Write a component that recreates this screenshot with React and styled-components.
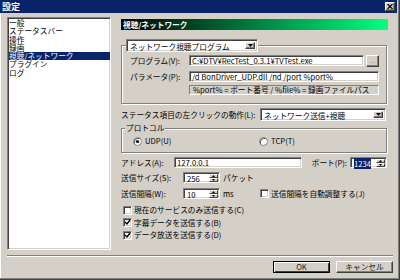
import React from 'react';
import styled, { createGlobalStyle } from 'styled-components';

const FONT = `"Noto Sans CJK JP", "Noto Sans", sans-serif`;

const Global = createGlobalStyle`
  html, body { margin: 0; padding: 0; background: #d4d0c8; }
  body { font-family: ${FONT}; font-size: 7.7px; line-height: 1; color: #000; }
  * { box-sizing: border-box; }
`;

const sunken = `
  background: #fff;
  border: 1px solid;
  border-color: #808080 #fff #fff #808080;
  box-shadow: inset 1px 1px 0 #404040, inset -1px -1px 0 #d4d0c8;
`;

const raised = `
  background: #d4d0c8;
  border: 1px solid;
  border-color: #fff #404040 #404040 #fff;
  box-shadow: inset -1px -1px 0 #808080, inset 1px 1px 0 #d4d0c8;
`;

const Window = styled.div`
  width: 400px;
  height: 280px;
  display: flex;
  flex-direction: column;
  background: #d4d0c8;
  border-right: 1px solid #404040;
  border-bottom: 1px solid #404040;
  box-shadow: inset -1px -1px 0 #808080, inset 1px 0 0 #fff;
  padding: 0 2px 2px 0;
`;

const TitleBar = styled.div`
  flex: none;
  height: 13px;
  background: #0a246a;
  display: flex;
  align-items: center;
  padding: 0 2px 0 2px;
`;

const TitleText = styled.span`
  color: #fff;
  font-weight: bold;
  font-size: 9px;
  line-height: 13px;
`;

const CloseButton = styled.div`
  ${raised}
  margin-left: auto;
  width: 10px;
  height: 9px;
  display: flex;
  align-items: center;
  justify-content: center;
`;

const Body = styled.div`
  flex: none;
  height: 237px;
  display: flex;
  padding: 4px 0 0 7px;
`;

const List = styled.div`
  ${sunken}
  width: 104px;
  height: 233px;
  padding: 1px 0 0 2px;
`;

const ListItem = styled.div`
  height: 8.25px;
  line-height: 8.25px;
  white-space: nowrap;
  margin-left: -1px;
  background: ${(p) => (p.$selected ? '#0a246a' : 'transparent')};
  color: ${(p) => (p.$selected ? '#fff' : '#000')};
`;

const Panel = styled.div`
  margin-left: 10px;
  width: 267px;
  display: flex;
  flex-direction: column;
`;

const Header = styled.div`
  margin-top: 2px;
  height: 11px;
  background: linear-gradient(to right, #000 0%, #00ff80 100%);
  color: #fff;
  font-weight: bold;
  line-height: 11px;
  padding-left: 2px;
`;

const Group = styled.fieldset`
  margin: ${(p) => p.$mt}px 0 0 0;
  width: 266px;
  min-width: 0;
  border: 1px solid #808080;
  box-shadow: inset 1px 1px 0 #fff, 1px 1px 0 #fff;
  padding: ${(p) => p.$pad};
`;

const ComboLegend = styled.legend`
  margin-left: -4px;
  padding: 0;
`;

const TextLegend = styled.legend`
  margin-left: -8px;
  padding: 0 1px;
  background: #d4d0c8;
  line-height: 8px;
  height: 8px;
`;

const ComboBox = styled.div`
  ${sunken}
  flex: none;
  width: ${(p) => p.$w}px;
  height: 13px;
  display: flex;
  align-items: stretch;
  padding: 2px;
`;

const ComboText = styled.span`
  flex: 1;
  padding-left: 1px;
  line-height: 9px;
  white-space: nowrap;
`;

const DropButton = styled.div`
  ${raised}
  flex: none;
  width: 10px;
  display: flex;
  align-items: center;
  justify-content: center;
`;

const FieldRow = styled.div`
  display: flex;
  align-items: ${(p) => p.$align || 'center'};
  height: ${(p) => p.$h}px;
  margin-top: ${(p) => p.$mt || 0}px;
`;

const Label = styled.span`
  flex: none;
  width: ${(p) => (p.$w ? `${p.$w}px` : 'auto')};
  white-space: nowrap;
`;

const TextBox = styled.div`
  ${sunken}
  flex: ${(p) => (p.$w ? 'none' : '1')};
  width: ${(p) => (p.$w ? `${p.$w}px` : 'auto')};
  height: 11px;
  padding: 0 2px;
  line-height: 9px;
  white-space: nowrap;
`;

const BrowseButton = styled.div`
  ${raised}
  width: 13px;
  height: 12px;
  margin-left: 2px;
  display: flex;
  align-items: center;
  justify-content: center;
  color: #808080;
  font-size: 6px;
  letter-spacing: -0.5px;
`;

const HintBox = styled.div`
  flex: 1;
  margin-left: 59px;
  height: 10px;
  border: 1px solid;
  border-color: #808080 #fff #fff #808080;
  padding-left: 3px;
  line-height: 8px;
  white-space: nowrap;
`;

const RadioRow = styled.div`
  display: flex;
  align-items: center;
  height: 10px;
`;

const RadioItem = styled.div`
  width: 126px;
  display: flex;
  align-items: center;
  gap: 3px;
`;

const SpinBox = styled.div`
  ${sunken}
  flex: none;
  width: 37px;
  height: 11px;
  display: flex;
  padding: 1px;
  margin-left: ${(p) => p.$ml || 0}px;
  margin-right: ${(p) => p.$mr || 0}px;
`;

const SpinText = styled.span`
  flex: 1;
  padding-left: 2px;
  line-height: 9px;
`;

const Selected = styled.span`
  background: #0a246a;
  color: #fff;
`;

const UpDown = styled.div`
  width: 9px;
  display: grid;
  grid-template-rows: 1fr 1fr;
`;

const UpDownButton = styled.div`
  background: #d4d0c8;
  border: 1px solid;
  border-color: #fff #404040 #404040 #fff;
  display: flex;
  align-items: center;
  justify-content: center;
`;

const GridRow = styled.div`
  display: grid;
  grid-template-columns: 62px 37px 40px 1fr;
  align-items: center;
  height: 11px;
  margin-top: ${(p) => p.$mt}px;
`;

const Unit = styled.span`
  padding-left: 3px;
  white-space: nowrap;
`;

const CheckRow = styled.div`
  display: flex;
  align-items: center;
  gap: 2px;
  height: ${(p) => (p.$h ? `${p.$h}px` : 'auto')};
  padding-left: ${(p) => p.$pl || 0}px;
  margin-top: ${(p) => p.$mt || 0}px;
  white-space: nowrap;
`;

const CheckBox = styled.div`
  ${sunken}
  flex: none;
  width: 9px;
  height: 9px;
  display: flex;
  align-items: center;
  justify-content: center;
`;

const Footer = styled.div`
  flex: 1;
  display: flex;
  flex-direction: column;
  padding: 0 4px 0 7px;
`;

const Separator = styled.div`
  margin-top: 5px;
  height: 2px;
  border-top: 1px solid #808080;
  border-bottom: 1px solid #fff;
`;

const ButtonRow = styled.div`
  margin-top: 4px;
  display: flex;
  justify-content: flex-end;
  gap: 6px;
`;

const DialogButton = styled.div`
  width: 57px;
  height: 12px;
  display: flex;
  align-items: center;
  justify-content: center;
  background: #d4d0c8;
  border: 1px solid;
  border-color: ${(p) => (p.$default ? '#000' : '#fff #404040 #404040 #fff')};
  box-shadow: ${(p) =>
    p.$default
      ? 'inset 1px 1px 0 #fff, inset -1px -1px 0 #404040'
      : 'inset -1px -1px 0 #808080'};
  color: #202020;
`;

const Arrow = () => (
  <svg width="5" height="3" viewBox="0 0 5 3">
    <path d="M0 0 L5 0 L2.5 3 Z" fill="#000" />
  </svg>
);

const SmallArrow = ({ up }) => (
  <svg width="3" height="2" viewBox="0 0 3 2">
    {up ? <path d="M1.5 0 L3 2 L0 2 Z" fill="#000" /> : <path d="M0 0 L3 0 L1.5 2 Z" fill="#000" />}
  </svg>
);

const CheckMark = () => (
  <svg width="7" height="7" viewBox="0 0 7 7">
    <path d="M1 3 L3 5 L6 1" stroke="#000" strokeWidth="1.4" fill="none" />
  </svg>
);

const Radio = ({ checked }) => (
  <svg width="9" height="9" viewBox="0 0 9 9">
    <circle cx="4.5" cy="4.5" r="4" fill="#fff" stroke="#808080" strokeWidth="1" />
    <path d="M1.5 6.5 A4 4 0 0 1 6.5 1.5" stroke="#404040" strokeWidth="1" fill="none" />
    {checked && <circle cx="4.5" cy="4.5" r="1.6" fill="#000" />}
  </svg>
);

const Combo = ({ w, children }) => (
  <ComboBox $w={w}>
    <ComboText>{children}</ComboText>
    <DropButton>
      <Arrow />
    </DropButton>
  </ComboBox>
);

const UpDownControl = () => (
  <UpDown>
    <UpDownButton>
      <SmallArrow up />
    </UpDownButton>
    <UpDownButton>
      <SmallArrow />
    </UpDownButton>
  </UpDown>
);

const Spin = ({ children, ml, mr }) => (
  <SpinBox $ml={ml} $mr={mr}>
    <SpinText>{children}</SpinText>
    <UpDownControl />
  </SpinBox>
);

const Check = ({ checked }) => <CheckBox>{checked && <CheckMark />}</CheckBox>;

const items = ['一般', 'ステータスバー', '操作', '録画', '視聴/ネットワーク', 'プラグイン', 'ログ'];

export default function App() {
  return (
    <>
      <Global />
      <Window>
        <TitleBar>
          <TitleText>設定</TitleText>
          <CloseButton>
            <svg width="6" height="5" viewBox="0 0 6 5">
              <path d="M0.5 0 L5.5 5 M5.5 0 L0.5 5" stroke="#000" strokeWidth="1.2" />
            </svg>
          </CloseButton>
        </TitleBar>
        <Body>
          <List>
            {items.map((it) => (
              <ListItem key={it} $selected={it === '視聴/ネットワーク'}>
                {it}
              </ListItem>
            ))}
          </List>
          <Panel>
            <Header>視聴/ネットワーク</Header>
            <Group $mt={9} $pad="3px 7px 8px 8px">
              <ComboLegend>
                <Combo w={132}>ネットワーク視聴プログラム</Combo>
              </ComboLegend>
              <FieldRow $h={12} $align="flex-start">
                <Label $w={59} style={{ lineHeight: '11px' }}>プログラム(V):</Label>
                <TextBox>C:¥DTV¥RecTest_0.3.1¥TVTest.exe</TextBox>
                <BrowseButton>...</BrowseButton>
              </FieldRow>
              <FieldRow $h={11} $mt={4}>
                <Label $w={59}>パラメータ(P):</Label>
                <TextBox>/d BonDriver_UDP.dll /nd /port %port%</TextBox>
              </FieldRow>
              <FieldRow $h={10} $mt={3}>
                <HintBox>%port% = ポート番号 / %file% = 録画ファイルパス</HintBox>
              </FieldRow>
            </Group>
            <FieldRow $h={13} $mt={4} style={{ justifyContent: 'space-between', paddingRight: 2 }}>
              <Label>ステータス項目の左クリックの動作(L):</Label>
              <Combo w={126}>ネットワーク送信+視聴</Combo>
            </FieldRow>
            <Group $mt={3} $pad="4px 0 6px 11px">
              <TextLegend>プロトコル</TextLegend>
              <RadioRow>
                <RadioItem>
                  <Radio checked />
                  <span>UDP(U)</span>
                </RadioItem>
                <RadioItem>
                  <Radio />
                  <span>TCP(T)</span>
                </RadioItem>
              </RadioRow>
            </Group>
            <FieldRow $h={11} $mt={4}>
              <Label $w={53}>アドレス(A):</Label>
              <TextBox $w={128}>127.0.0.1</TextBox>
              <Label style={{ marginLeft: 'auto' }}>ポート(P):</Label>
              <Spin ml={3} mr={1}>
                <Selected>1234</Selected>
              </Spin>
            </FieldRow>
            <GridRow $mt={4}>
              <Label>送信サイズ(S):</Label>
              <Spin>256</Spin>
              <Unit>パケット</Unit>
            </GridRow>
            <GridRow $mt={5}>
              <Label>送信間隔(W):</Label>
              <Spin>10</Spin>
              <Unit>ms</Unit>
              <CheckRow>
                <Check />
                <span>送信間隔を自動調整する(J)</span>
              </CheckRow>
            </GridRow>
            <CheckRow $h={12.5} $pl={2} $mt={5}>
              <Check />
              <span>現在のサービスのみ送信する(C)</span>
            </CheckRow>
            <CheckRow $h={12.5} $pl={2}>
              <Check checked />
              <span>字幕データを送信する(B)</span>
            </CheckRow>
            <CheckRow $h={12.5} $pl={2}>
              <Check checked />
              <span>データ放送を送信する(D)</span>
            </CheckRow>
          </Panel>
        </Body>
        <Footer>
          <Separator />
          <ButtonRow>
            <DialogButton $default>OK</DialogButton>
            <DialogButton>キャンセル</DialogButton>
          </ButtonRow>
        </Footer>
      </Window>
    </>
  );
}
